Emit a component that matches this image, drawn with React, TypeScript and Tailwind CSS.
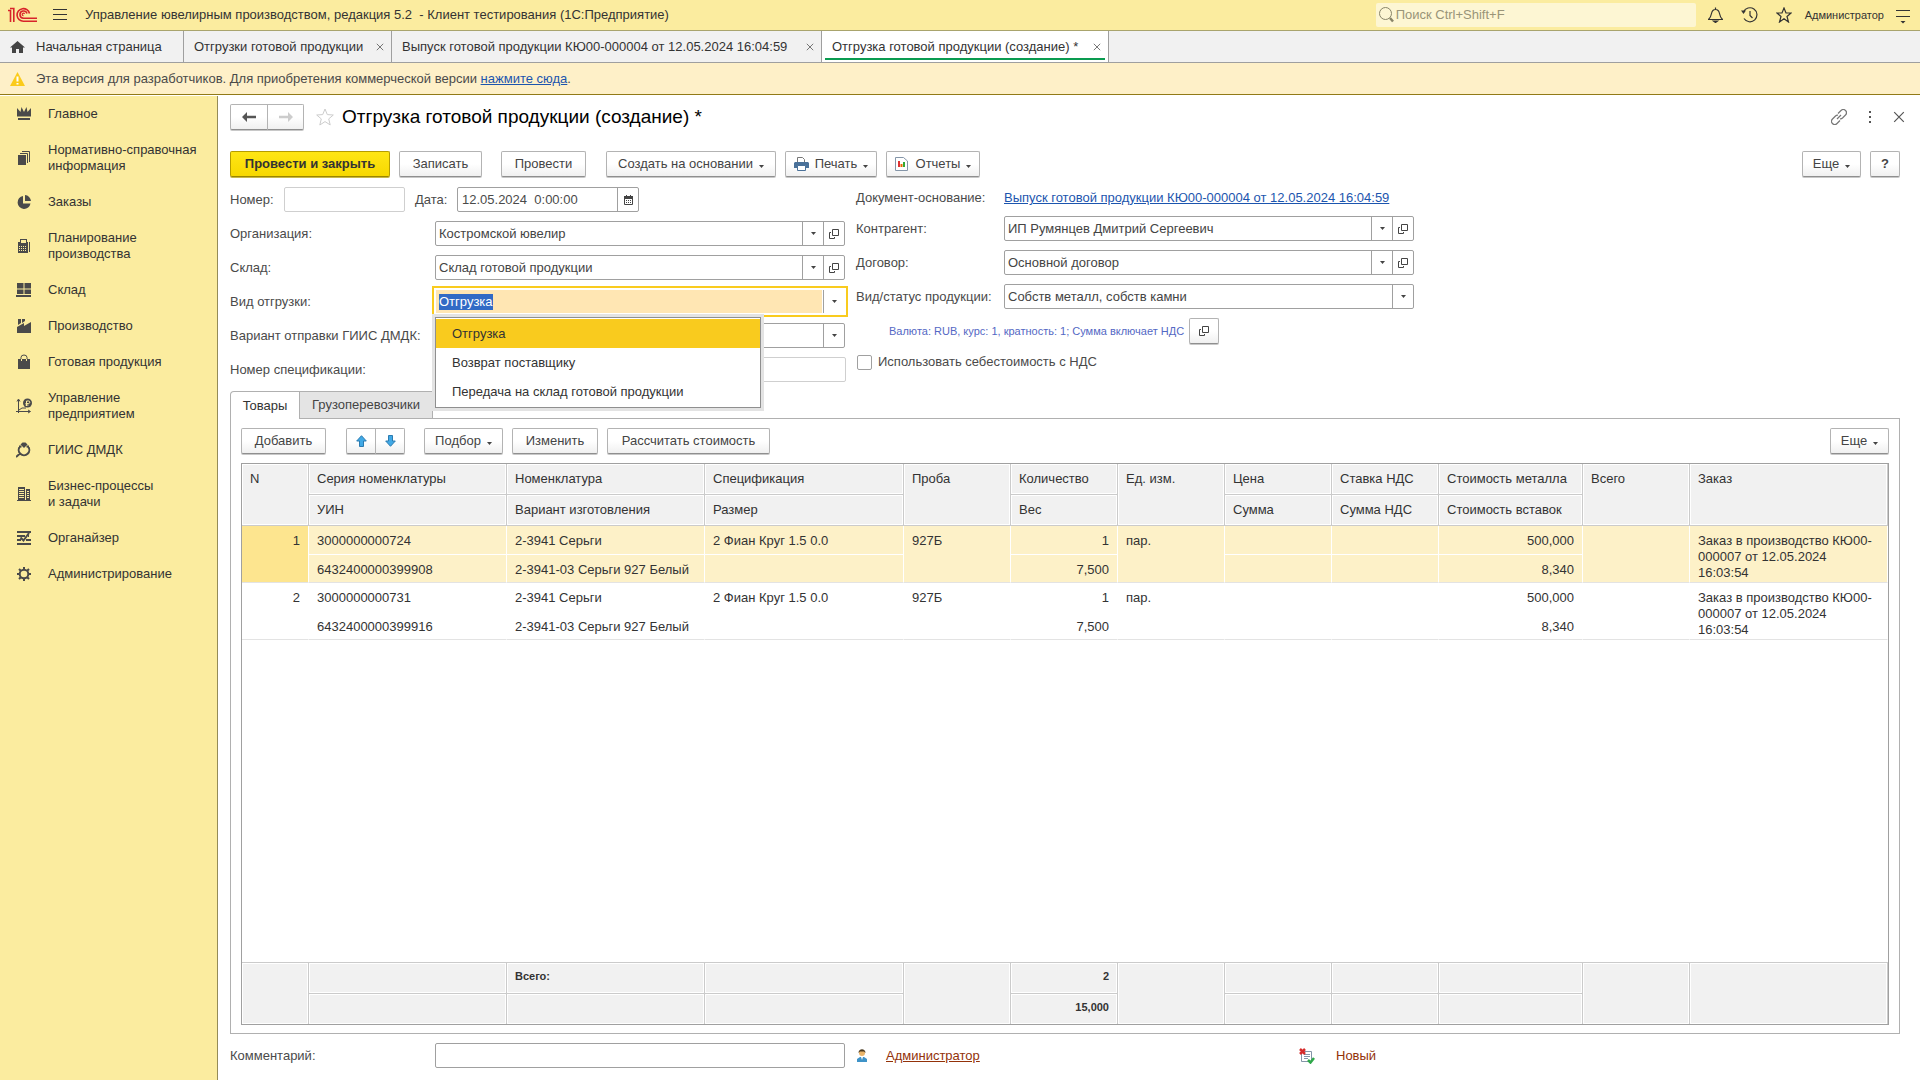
import React, { useEffect, useRef, useState } from "react";

const menu: { label: string; icon: React.ReactNode }[] = [
  {
    label: "Главное",
    icon: (
      <>
        <path d="M1 2l3.500 4L5.500 1l2.500 5L10.500 1l1 5L15 2v8.500H1z" />
        <path d="M2 12h12v2H2z" />
      </>
    ),
  },
  {
    label: "Нормативно-справочная\nинформация",
    icon: (
      <>
        <path d="M2 5h8v10H2z" />
        <path d="M4 3.500h7.500V13M6 1.500h7.500V12" fill="none" stroke="#4a4a4a" />
      </>
    ),
  },
  {
    label: "Заказы",
    icon: (
      <>
        <path d="M7 2a6.500 6.500 0 1 0 7.500 7.500H7z" />
        <path d="M9 1a6.500 6.500 0 0 1 6 6H9z" />
      </>
    ),
  },
  {
    label: "Планирование\nпроизводства",
    icon: (
      <>
        <path d="M2 4h2V1h7v3h1v11H2zM5 2v3h5V2z" fillRule="evenodd" />
        <path d="M13 4h1v10h-1z" />
        <path d="M3 8.500h8M3 10.500h8M3 12.500h8" stroke="#fbec9f" strokeDasharray="1 1" />
      </>
    ),
  },
  {
    label: "Склад",
    icon: (
      <>
        <path d="M1 1h6.500v5.500H1zM8.500 1H15v5.500H8.500zM1 7.500h6.500V12H1zM8.500 7.500H15V12H8.500z" />
        <path d="M0 13h15v2H0z" />
      </>
    ),
  },
  {
    label: "Производство",
    icon: (
      <>
        <path d="M2 1h3v4l-3 2zM6 1h3v2L6 5z" />
        <path d="M1 9l7-4v3l7-4v11H1z" />
      </>
    ),
  },
  {
    label: "Готовая продукция",
    icon: (
      <>
        <path d="M2 5h12v10H2z" />
        <path d="M5 5V3.500a3 2.500 0 0 1 6 0V5" fill="none" stroke="#4a4a4a" />
        <path d="M5.500 5v2M10.500 5v2" stroke="#fbec9f" />
      </>
    ),
  },
  {
    label: "Управление\nпредприятием",
    icon: (
      <>
        <path d="M2.500 15V2M1 3.500L2.500 1 4 3.500M0 13.500h14M12 12l2.500 1.500L12 15M3 12l3-2h4" fill="none" stroke="#4a4a4a" />
        <circle cx="11.500" cy="5" r="4.500" />
        <path d="M10.500 8V3h2a1.200 1.200 0 0 1 0 2.500H9.500M9.500 7h3" fill="none" stroke="#fbec9f" />
      </>
    ),
  },
  {
    label: "ГИИС ДМДК",
    icon: (
      <>
        <path d="M4.500 2.500L6.500 .500h3l2 2L8 6z" />
        <path d="M4 4.500a5.300 5.300 0 1 0 8 0M3 4.500h2.500M10.500 4.500H13M4 11.500l-4 3.500" fill="none" stroke="#4a4a4a" strokeWidth="2" />
      </>
    ),
  },
  {
    label: "Бизнес-процессы\nи задачи",
    icon: (
      <>
        <path d="M2 1h7v13H2zM10 3h4v11h-4z" />
        <path d="M1 14h14v1H1z" />
        <path d="M3 3.500h5M3 5.500h5M3 7.500h5M3 9.500h5M3 11.500h5M11 5.500h2M11 7.500h2M11 9.500h2M11 11.500h2" stroke="#fbec9f" />
      </>
    ),
  },
  {
    label: "Органайзер",
    icon: (
      <path d="M1 2h14M1 6h8M12 6h1M1 10h4M10 10h5M1 14h14M4.500 7.500l3 3L13 3" fill="none" stroke="#4a4a4a" strokeWidth="2" />
    ),
  },
  {
    label: "Администрирование",
    icon: (
      <>
        <circle cx="8" cy="8" r="4.300" fill="none" stroke="#4a4a4a" strokeWidth="2" />
        <path
          d="M8 1v2.500M8 12.500V15M1 8h2.500M12.500 8H15M3 3l1.800 1.800M11.200 11.200L13 13M3 13l1.800-1.800M11.200 4.800L13 3"
          stroke="#4a4a4a"
          strokeWidth="2"
        />
      </>
    ),
  },
];

const tabs = [
  { label: "Отгрузки готовой продукции", width: "w-[208px]", active: false },
  { label: "Выпуск готовой продукции КЮ00-000004 от 12.05.2024 16:04:59", width: "w-[430px]", active: false },
  { label: "Отгрузка готовой продукции (создание) *", width: "w-[287px]", active: true },
];

const shipmentTypes = ["Отгрузка", "Возврат поставщику", "Передача на склад готовой продукции"];

// second is undefined for columns whose cell spans both lines of a row
type Column = {
  first: string;
  second?: string;
  width: string;
  right?: boolean;
};

const columns: Column[] = [
  { first: "N", width: "w-[67px]", right: true },
  { first: "Серия номенклатуры", second: "УИН", width: "w-[198px]" },
  { first: "Номенклатура", second: "Вариант изготовления", width: "w-[198px]" },
  { first: "Спецификация", second: "Размер", width: "w-[199px]" },
  { first: "Проба", width: "w-[107px]" },
  { first: "Количество", second: "Вес", width: "w-[107px]", right: true },
  { first: "Ед. изм.", width: "w-[107px]" },
  { first: "Цена", second: "Сумма", width: "w-[107px]" },
  { first: "Ставка НДС", second: "Сумма НДС", width: "w-[107px]" },
  { first: "Стоимость металла", second: "Стоимость вставок", width: "w-[144px]", right: true },
  { first: "Всего", width: "w-[107px]" },
  { first: "Заказ", width: "" },
];

const order = "Заказ в производство КЮ00-000007 от 12.05.2024 16:03:54";

const rows = [
  {
    first: ["1", "3000000000724", "2-3941 Серьги", "2 Фиан Круг 1.5 0.0", "927Б", "1", "пар.", "", "", "500,000", "", order],
    second: ["", "6432400000399908", "2-3941-03 Серьги 927 Белый", "", "", "7,500", "", "", "", "8,340", "", ""],
  },
  {
    first: ["2", "3000000000731", "2-3941 Серьги", "2 Фиан Круг 1.5 0.0", "927Б", "1", "пар.", "", "", "500,000", "", order],
    second: ["", "6432400000399916", "2-3941-03 Серьги 927 Белый", "", "", "7,500", "", "", "", "8,340", "", ""],
  },
];

const totals = {
  first: ["", "", "Всего:", "", "", "2", "", "", "", "", "", ""],
  second: ["", "", "", "", "", "15,000", "", "", "", "", "", ""],
};

const Caret = () => (
  <svg width="5" height="3" viewBox="0 0 5 3" className="shrink-0" fill="#444">
    <path d="M0 0h5L2.500 3z" />
  </svg>
);

const OpenIcon = () => (
  <svg width="10" height="10" viewBox="0 0 10 10" fill="none" stroke="#444">
    <path d="M3.500 .500h6v6h-6zM2 3.500H.500v6h5V8" />
  </svg>
);

const Cross = ({ size }: { size: number }) => (
  <svg width={size} height={size} viewBox="0 0 10 10" fill="none" stroke="#555">
    <path d="M1 1l8 8M9 1L1 9" />
  </svg>
);

const Button = ({
  children,
  caret,
  className = "px-3",
}: {
  children: React.ReactNode;
  caret?: boolean;
  className?: string;
}) => (
  <button
    type="button"
    className={`flex h-[26px] shrink-0 items-center justify-center gap-1 rounded-xs border border-[#b3b3b3] border-b-[#8f8f8f] bg-linear-to-b from-white from-50% to-[#f0f0f0] shadow-[0_1px_0_#c8c8c8] whitespace-nowrap text-[#444] ${className}`}
  >
    {children}
    {caret && (
      <span className="pt-1 pl-0.5">
        <Caret />
      </span>
    )}
  </button>
);

const SelectField = ({
  id,
  value,
  open,
}: {
  id: string;
  value: string;
  open?: boolean;
}) => (
  <div className="flex h-[25px] w-full rounded-xs border border-[#a0a0a0] bg-white">
    <div className="relative flex min-w-0 flex-1">
      <select id={id} defaultValue={value} className="w-full appearance-none bg-transparent pr-6 pl-[3px] text-[#444] outline-none">
        <option>{value}</option>
      </select>
      <span className="pointer-events-none absolute inset-y-0 right-0 flex w-[21px] items-center justify-center border-l border-[#a0a0a0]">
        <Caret />
      </span>
    </div>
    {open && (
      <button type="button" aria-label="Открыть" className="flex w-[21px] items-center justify-center border-l border-[#a0a0a0]">
        <OpenIcon />
      </button>
    )}
  </div>
);

const ShipmentType = () => {
  const [value, setValue] = useState(shipmentTypes[0]);
  const input = useRef<HTMLInputElement>(null);

  useEffect(() => {
    input.current?.focus();
    input.current?.select();
  }, []);

  return (
    <div className="relative">
      <div className="-mx-[3px] -my-[3px] flex h-[31px] border-2 border-[#f9cb1e] bg-white p-0.5">
        <input
          id="type"
          ref={input}
          role="combobox"
          aria-expanded="true"
          aria-controls="type-list"
          value={value}
          onChange={(e) => setValue(e.target.value)}
          className="mr-px min-w-0 flex-1 bg-[#ffe6b3] pl-[3px] leading-4 text-[#444] outline-none selection:bg-[#316ac5] selection:text-white"
        />
        <button type="button" aria-label="Выбрать" className="flex w-[21px] items-center justify-center border-l border-[#a0a0a0]">
          <Caret />
        </button>
      </div>
      <ul
        id="type-list"
        role="listbox"
        className="absolute top-[31px] left-0 z-10 w-[326px] border border-[#8f8f8f] bg-white py-px shadow-[0_0_0_3px_#e3e3e3]"
      >
        {shipmentTypes.map((type) => (
          <li
            key={type}
            role="option"
            aria-selected={type === value}
            onClick={() => setValue(type)}
            className={`flex h-[29px] items-center px-4 text-[#333] ${type === value ? "bg-[#f9cb1e]" : ""}`}
          >
            {type}
          </li>
        ))}
      </ul>
    </div>
  );
};

const Columns = () => (
  <colgroup>
    {columns.map((column) => (
      <col key={column.first} className={column.width} />
    ))}
  </colgroup>
);

const grayCell = "border-r border-b border-[#cbcbcb] bg-[#f1f1f1] px-2 align-top shadow-[inset_0_0_0_1px_#fff]";

const GoodsTable = () => (
  <div className="flex flex-1 flex-col border border-[#a0a0a0] bg-white leading-4 text-[#333]">
    <table className="w-full table-fixed border-separate border-spacing-0">
      <Columns />
      <thead className="text-left">
        <tr className="h-[31px]">
          {columns.map((column) => (
            <th key={column.first} rowSpan={column.second ? 1 : 2} className={`${grayCell} pt-[7px] font-normal whitespace-nowrap`}>
              {column.first}
            </th>
          ))}
        </tr>
        <tr className="h-[31px]">
          {columns
            .filter((column) => column.second)
            .map((column) => (
              <th key={column.second} className={`${grayCell} pt-[7px] font-normal whitespace-nowrap`}>
                {column.second}
              </th>
            ))}
        </tr>
      </thead>
      {rows.map((row, index) => {
        const selected = index === 0;
        const fill = selected ? "bg-[#fdf1c8]" : "";
        return (
          <tbody key={row.first[0]}>
            <tr className="h-[29px]">
              {columns.map((column, i) => (
                <td
                  key={column.first}
                  rowSpan={column.second ? 1 : 2}
                  className={`border-r border-b border-white px-2 pt-[7px] align-top ${selected && i === 0 ? "bg-[#fde58f]" : fill} ${
                    column.second ? "" : "border-b-[#e3e3e3]"
                  } ${column.right ? "text-right" : ""}`}
                >
                  {/* keeps a three-line text from growing the row */}
                  <div className={column.second ? "" : "h-0 overflow-visible"}>{row.first[i]}</div>
                </td>
              ))}
            </tr>
            <tr className="h-[28px]">
              {columns.map(
                (column, i) =>
                  column.second && (
                    <td
                      key={column.second}
                      className={`border-r border-b border-white border-b-[#e3e3e3] px-2 pt-[7px] align-top whitespace-nowrap ${fill} ${
                        column.right ? "text-right" : ""
                      }`}
                    >
                      {row.second[i]}
                    </td>
                  )
              )}
            </tr>
          </tbody>
        );
      })}
    </table>
    <div className="flex-1 border-b border-[#cbcbcb]" />
    <table className="w-full table-fixed border-separate border-spacing-0 text-[11px] font-bold">
      <Columns />
      <tbody>
        <tr className="h-[31px]">
          {columns.map((column, i) => (
            <td
              key={column.first}
              rowSpan={column.second ? 1 : 2}
              className={`${grayCell} pt-[5px] ${column.second ? "" : "border-b-0"} ${column.right ? "text-right" : ""}`}
            >
              {totals.first[i]}
            </td>
          ))}
        </tr>
        <tr className="h-[30px]">
          {columns.map(
            (column, i) =>
              column.second && (
                <td key={column.second} className={`${grayCell} border-b-0 pt-[5px] ${column.right ? "text-right" : ""}`}>
                  {totals.second[i]}
                </td>
              )
          )}
        </tr>
      </tbody>
    </table>
  </div>
);

const Header = () => (
  <header className="flex h-[31px] shrink-0 items-center border-b border-[#a9a46d] bg-[#fbec9f] text-[#333]">
    <svg width="30" height="16" viewBox="0 0 30 16" className="ml-2 shrink-0" fill="none" stroke="#d8232a" strokeWidth="1.600">
      <path d="M0 3.500h2.500V15M2 1.500h3.800V15" />
      <path d="M21.500 6.500A6.300 6.300 0 1 0 15.500 14.200H29" />
      <path d="M19 6.500A3.600 3.600 0 1 0 15.500 11.200H29" />
      <path d="M16.500 7a1.200 1.200 0 1 0-1 1.600" strokeWidth="1.200" />
    </svg>
    <button type="button" aria-label="Меню" className="ml-[15px]">
      <svg width="14" height="12" viewBox="0 0 14 12" stroke="#333">
        <path d="M0 .500h14M0 5.500h14M0 10.500h14" />
      </svg>
    </button>
    <h1 className="ml-[18px] flex-1 whitespace-pre">
      Управление ювелирным производством, редакция 5.2  - Клиент тестирования (1С:Предприятие)
    </h1>
    <label className="flex h-6 w-[320px] items-center rounded-xs bg-[#fdf6d3] pl-[3px]">
      <svg width="15" height="16" viewBox="0 0 15 16" fill="none" stroke="#888468">
        <circle cx="6.500" cy="6.500" r="6" />
        <path d="M11 11l3 3.500" strokeWidth="2.500" />
      </svg>
      <input
        aria-label="Поиск"
        placeholder="Поиск Ctrl+Shift+F"
        className="ml-0.5 min-w-0 flex-1 bg-transparent outline-none placeholder:text-[#999478]"
      />
    </label>
    <div className="ml-3 flex items-center gap-[18px]">
      <button type="button" aria-label="Уведомления">
        <svg width="15" height="16" viewBox="0 0 15 16" fill="none" stroke="#333" strokeWidth="1.200">
          <path d="M.500 12.500h14c-2-2-2.500-3-3-6C11 4 10 2.500 7.500 2.500S4 4 3.500 6.500c-.500 3-1 4-3 6zM7.500 2.500V.500" />
          <path d="M5.500 14h4l-2 1.500z" fill="#333" />
        </svg>
      </button>
      <button type="button" aria-label="История">
        <svg width="17" height="16" viewBox="0 0 17 16" fill="none" stroke="#333" strokeWidth="1.200">
          <path d="M2.500 5A7 7 0 1 1 3 11.500M9 4v4.500l2.500 2.500" />
          <path d="M0 3.500h5L2.500 7z" fill="#333" stroke="none" />
        </svg>
      </button>
      <button type="button" aria-label="Избранное">
        <svg width="16" height="16" viewBox="0 0 16 16" fill="none" stroke="#333" strokeWidth="1.200">
          <path d="M8 1l2 5h5l-4 3.500 1.500 5.500L8 11.800 3.500 15 5 9.500 1 6h5z" />
        </svg>
      </button>
    </div>
    <span className="ml-[13px] text-[11px]">Администратор</span>
    <button type="button" aria-label="Настройки" className="mr-2.5 ml-3 pt-1">
      <svg width="14" height="15" viewBox="0 0 14 15" stroke="#333" fill="#333">
        <path d="M0 .500h14M0 6.500h14" />
        <path d="M4.500 11h5L7 13.500z" stroke="none" />
      </svg>
    </button>
  </header>
);

const TabBar = () => (
  <nav className="flex h-8 shrink-0 border-b border-[#9f9f9f] bg-[#f1f1f1] text-[#333]">
    <button type="button" className="flex w-[184px] items-center border-r border-[#9f9f9f] pl-2.5">
      <svg width="15" height="12" viewBox="0 0 15 12" fill="#444">
        <path d="M7.500 0L0 6.500h2V12h4V8h3v4h4V6.500h2z" />
      </svg>
      <span className="ml-[11px]">Начальная страница</span>
    </button>
    {tabs.map((tab) => (
      <div
        key={tab.label}
        className={`relative flex items-center justify-between border-r border-[#9f9f9f] pr-[7px] pl-2.5 ${tab.width} ${
          tab.active ? "bg-white" : ""
        }`}
      >
        <button type="button" className="whitespace-nowrap">
          {tab.label}
        </button>
        <button type="button" aria-label="Закрыть">
          <Cross size={8} />
        </button>
        {tab.active && <span className="absolute inset-x-[3px] bottom-0.5 h-0.5 bg-[#0a9b50]" />}
      </div>
    ))}
  </nav>
);

const Sidebar = () => (
  <aside className="w-[218px] shrink-0 border-r border-[#948b57] bg-[#fbec9f] text-[#333]">
    {menu.map((item) => (
      <a key={item.label} href="#" className="flex items-center py-2.5 pl-4 leading-4">
        <svg width="16" height="16" viewBox="0 0 16 16" fill="#4a4a4a" className="shrink-0">
          {item.icon}
        </svg>
        <span className="ml-4 whitespace-pre-line">{item.label}</span>
      </a>
    ))}
  </aside>
);

const TitleBar = () => (
  <div className="-mr-[5px] flex items-center">
    <div className="flex">
      <Button className="w-[38px] rounded-r-none">
        <svg width="14" height="10" viewBox="0 0 14 10" fill="#555">
          <path d="M0 5l5-5v3.800h9v2.400H5V10z" />
        </svg>
      </Button>
      <Button className="-ml-px w-[37px] rounded-l-none">
        <svg width="14" height="10" viewBox="0 0 14 10" fill="#ccc">
          <path d="M14 5L9 0v3.800H0v2.400h9V10z" />
        </svg>
      </Button>
    </div>
    <button type="button" aria-label="В избранное" className="ml-3">
      <svg width="18" height="18" viewBox="0 0 18 18" fill="none" stroke="#ccc">
        <path d="M9 1l2.300 5.600 6 .400-4.600 3.900 1.500 6L9 13.600 3.800 17l1.500-6.100L.700 7l6-.400z" />
      </svg>
    </button>
    <h2 className="ml-2 flex-1 text-[19px] leading-6 text-black">Отгрузка готовой продукции (создание) *</h2>
    <div className="flex items-center gap-[21px]">
      <button type="button" aria-label="Ссылка">
        <svg width="16" height="16" viewBox="0 0 16 16" fill="none" stroke="#777" strokeWidth="1.200">
          <path d="M6 10l4-4M7 4.500l3-3a3 3 0 0 1 4.500 4.500l-3 3a3 3 0 0 1-2.500.800M9 11.500l-3 3A3 3 0 0 1 1.500 10l3-3A3 3 0 0 1 7 6.200" />
        </svg>
      </button>
      <button type="button" aria-label="Действия">
        <svg width="4" height="12" viewBox="0 0 4 12" fill="#555">
          <path d="M1 0h2v2H1zM1 5h2v2H1zM1 10h2v2H1z" />
        </svg>
      </button>
      <button type="button" aria-label="Закрыть">
        <Cross size={12} />
      </button>
    </div>
  </div>
);

const Toolbar = () => (
  <div className="mt-[21px] flex">
    <button
      type="button"
      className="h-[26px] w-[160px] rounded-xs border border-[#b59c00] border-b-[#9a8500] bg-linear-to-b from-[#ffe614] to-[#f7d800] font-bold text-[#333] shadow-[0_1px_0_#c8b84a]"
    >
      Провести и закрыть
    </button>
    <Button className="ml-[9px] w-[83px]">Записать</Button>
    <Button className="ml-[19px] w-[85px]">Провести</Button>
    <Button caret className="ml-5 w-[170px]">
      Создать на основании
    </Button>
    <Button caret className="ml-[9px] w-[92px]">
      <svg width="15" height="14" viewBox="0 0 15 14" className="mr-0.5">
        <path d="M3.500 5V.500h5l2 2V5" fill="#fff" stroke="#777" />
        <path d="M1 5h13l1 1v5H0V6z" fill="#4a7199" />
        <path d="M3.500 8.500h8v5h-8z" fill="#fff" stroke="#4a7199" />
      </svg>
      Печать
    </Button>
    <Button caret className="ml-[9px] w-[94px]">
      <svg width="13" height="14" viewBox="0 0 13 14" className="mr-1">
        <path d="M.500.500h8l4 3.500v9.500H.500z" fill="#fff" stroke="#8495a8" />
        <path d="M3 4h2v6H3z" fill="#d33" />
        <path d="M5.500 7h2v3h-2z" fill="#e60" />
        <path d="M8 5h2v5H8z" fill="#3a3" />
      </svg>
      Отчеты
    </Button>
    <div className="flex-1" />
    <Button caret className="w-[59px]">
      Еще
    </Button>
    <Button className="ml-[9px] w-[30px] font-bold">?</Button>
  </div>
);

const labelClass = "w-[205px] shrink-0 whitespace-nowrap";
const rightLabelClass = "w-[148px] shrink-0 whitespace-nowrap";

const DocumentForm = () => (
  <form className="mt-2.5 flex items-start gap-2.5 text-[#4a4a4a]">
    <div className="flex w-[616px] flex-col gap-[9px]">
      <div className="flex h-[25px] items-center">
        <label htmlFor="number" className="w-[54px]">
          Номер:
        </label>
        <input id="number" className="h-full w-[121px] rounded-xs border border-[#cfcfcf] px-1" />
        <label htmlFor="date" className="ml-2.5 w-[42px]">
          Дата:
        </label>
        <div className="flex h-full w-[182px] rounded-xs border border-[#a0a0a0]">
          <input id="date" defaultValue="12.05.2024  0:00:00" className="min-w-0 flex-1 px-1 outline-none" />
          <button type="button" aria-label="Календарь" className="flex w-[21px] items-center justify-center border-l border-[#a0a0a0]">
            <svg width="9" height="10" viewBox="0 0 9 10">
              <path d="M.500 1.500h8v8h-8z" fill="#fff" stroke="#444" />
              <path d="M0 1h9v3H0zM2 0h1v1H2zM6 0h1v1H6z" fill="#444" />
              <path d="M2 5.500h5M2 7.500h5" stroke="#444" strokeDasharray="1 1" />
            </svg>
          </button>
        </div>
      </div>
      <div className="flex w-[615px] items-center">
        <label htmlFor="organization" className={labelClass}>
          Организация:
        </label>
        <SelectField id="organization" value="Костромской ювелир" open />
      </div>
      <div className="flex w-[615px] items-center">
        <label htmlFor="warehouse" className={labelClass}>
          Склад:
        </label>
        <SelectField id="warehouse" value="Склад готовой продукции" open />
      </div>
      <div className="flex h-[25px] w-[615px] items-center">
        <label htmlFor="type" className={labelClass}>
          Вид отгрузки:
        </label>
        <div className="h-[25px] flex-1">
          <ShipmentType />
        </div>
      </div>
      <div className="flex w-[615px] items-center">
        <label htmlFor="variant" className={labelClass}>
          Вариант отправки ГИИС ДМДК:
        </label>
        <SelectField id="variant" value="" />
      </div>
      <div className="flex items-center">
        <label htmlFor="specification" className={labelClass}>
          Номер спецификации:
        </label>
        <input id="specification" className="h-[25px] min-w-0 flex-1 rounded-xs border border-[#cfcfcf] px-1" />
      </div>
    </div>
    <div className="flex w-[558px] flex-col gap-[9px]">
      <div className="flex h-5 items-center pt-0.5">
        <span className={rightLabelClass}>Документ-основание:</span>
        <a href="#" className="whitespace-nowrap text-[#1c55ae] underline">
          Выпуск готовой продукции КЮ00-000004 от 12.05.2024 16:04:59
        </a>
      </div>
      <div className="flex items-center">
        <label htmlFor="partner" className={rightLabelClass}>
          Контрагент:
        </label>
        <SelectField id="partner" value="ИП Румянцев Дмитрий Сергеевич" open />
      </div>
      <div className="flex items-center">
        <label htmlFor="contract" className={rightLabelClass}>
          Договор:
        </label>
        <SelectField id="contract" value="Основной договор" open />
      </div>
      <div className="flex items-center">
        <label htmlFor="status" className={rightLabelClass}>
          Вид/статус продукции:
        </label>
        <SelectField id="status" value="Собств металл, собств камни" />
      </div>
      <div className="flex items-center gap-[5px] pl-[33px]">
        <span className="text-[11px] whitespace-nowrap text-[#5468c4]">Валюта: RUB, курс: 1, кратность: 1; Сумма включает НДС</span>
        <Button className="w-[30px]">
          <OpenIcon />
        </Button>
      </div>
      <label className="flex h-[18px] items-center gap-1.5">
        <input type="checkbox" className="ml-px h-[15px] w-[15px] appearance-none rounded-xs border border-[#a0a0a0] bg-white" />
        Использовать себестоимость с НДС
      </label>
    </div>
  </form>
);

const Goods = () => (
  <section className="mt-[9px] flex flex-1 flex-col">
    <div className="flex h-[27px]" role="tablist">
      <button
        type="button"
        role="tab"
        aria-selected="true"
        className="z-1 -mb-px w-[70px] rounded-tl-sm border border-b-0 border-[#b0b0b0] bg-white text-[#333]"
      >
        Товары
      </button>
      <button
        type="button"
        role="tab"
        aria-selected="false"
        className="w-[133px] border-t border-r border-[#b0b0b0] bg-[#e4e4e4] text-[#444]"
      >
        Грузоперевозчики
      </button>
    </div>
    <div className="flex flex-1 flex-col border border-[#b0b0b0] px-2.5 pt-[9px] pb-2">
      <div className="mb-[9px] flex">
        <Button className="w-[85px]">Добавить</Button>
        <Button className="ml-5 w-[30px] rounded-r-none">
          <svg width="11" height="12" viewBox="0 0 11 12" fill="#41a9e6" stroke="#2b7bb0">
            <path d="M5.500.700L10.300 6H7.500v5.500h-4V6H.700z" />
          </svg>
        </Button>
        <Button className="-ml-px w-[30px] rounded-l-none">
          <svg width="11" height="12" viewBox="0 0 11 12" fill="#41a9e6" stroke="#2b7bb0">
            <path d="M5.500 11.300L.700 6h2.800V.500h4V6h2.800z" />
          </svg>
        </Button>
        <Button caret className="ml-[19px] w-[79px]">
          Подбор
        </Button>
        <Button className="ml-[9px] w-[86px]">Изменить</Button>
        <Button className="ml-[9px] w-[163px]">Рассчитать стоимость</Button>
        <div className="flex-1" />
        <Button caret className="w-[59px]">
          Еще
        </Button>
      </div>
      <GoodsTable />
    </div>
  </section>
);

const Footer = () => (
  <footer className="flex items-center pt-[9px] pb-3 text-[#4a4a4a]">
    <label htmlFor="comment" className={labelClass}>
      Комментарий:
    </label>
    <input id="comment" className="h-[25px] w-[410px] rounded-xs border border-[#a0a0a0] px-1" />
    <svg width="10" height="13" viewBox="0 0 10 13" className="ml-3 shrink-0">
      <path d="M0 13V10l3-2h4l3 2v3z" fill="#3f93c8" />
      <path d="M4 8h2l-1 3z" fill="#fff" />
      <circle cx="5" cy="4" r="3" fill="#eab56b" />
      <path d="M1.500 4C1.500-1 8.500-1 8.500 4L7 2.500H3z" fill="#4a3a20" />
    </svg>
    <a href="#" className="ml-[19px] w-[413px] text-[#933209] underline">
      Администратор
    </a>
    <svg width="16" height="16" viewBox="0 0 16 16" className="shrink-0">
      <path d="M2.500 3.500h10v10h-10z" fill="#fff" stroke="#8495a8" />
      <path d="M5 6.500h6M5 8.500h6M5 10.500h4" stroke="#8495a8" />
      <path d="M1 1l5 5M6 1L1 6" stroke="#d62b2b" strokeWidth="2.500" />
      <path d="M9 12l2.500 2.500L15 10" fill="none" stroke="#2fa84a" strokeWidth="2.500" />
    </svg>
    <span className="ml-[21px] text-[#933209]">Новый</span>
  </footer>
);

export default function App() {
  return (
    <div className="flex min-h-screen flex-col bg-white font-['Liberation_Sans',Arial,sans-serif] text-[13px]">
      <Header />
      <TabBar />
      <div className="flex h-8 shrink-0 items-center border-b border-[#917a17] bg-[#fef0c8] pl-2.5 text-[#4a4a4a]">
        <svg width="15" height="14" viewBox="0 0 15 14" className="mr-[11px]">
          <path d="M7.500 0L15 14H0z" fill="#fbcb1b" />
          <path d="M6.500 4.500h2v5h-2zM6.500 11h2v1.500h-2z" fill="#fff" />
        </svg>
        <p>
          Эта версия для разработчиков. Для приобретения коммерческой версии{" "}
          <a href="#" className="text-[#1c55ae] underline">
            нажмите сюда
          </a>
          .
        </p>
      </div>
      <div className="mt-px flex flex-1">
        <Sidebar />
        <main className="flex min-w-0 flex-1 flex-col pt-2 pr-5 pl-3">
          <TitleBar />
          <Toolbar />
          <DocumentForm />
          <Goods />
          <Footer />
        </main>
      </div>
    </div>
  );
}
